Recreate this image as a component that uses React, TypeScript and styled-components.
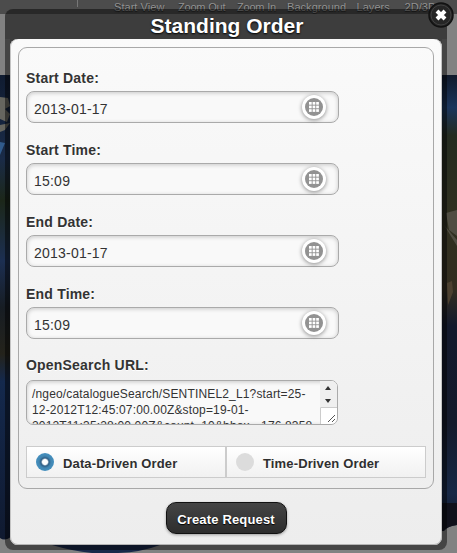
import React from "react";
import styled, { createGlobalStyle } from "styled-components";

const Global = createGlobalStyle`
  * { box-sizing: border-box; }
  html, body { margin: 0; width: 457px; height: 553px; overflow: hidden; background: #808080; }
  body { font-family: "Liberation Sans", Arial, sans-serif; color: #333; }
`;

const Page = styled.div`
  position: relative;
  width: 457px;
  height: 553px;
  overflow: hidden;
`;

const Backdrop = styled.svg`
  position: absolute;
  inset: 0;
`;

const Toolbar = styled.nav`
  position: absolute;
  inset: 0 0 auto 0;
  height: 14px;
  display: flex;
  gap: 12px;
  padding-left: 114px;
  background: #4c4c4c;
  color: #929292;
  font-size: 11px;
  line-height: 14px;
  white-space: nowrap;
  text-shadow: 0 1px 1px #222;
`;

const ToolItem = styled.span<{ $w: number; $tight?: boolean }>`
  flex: 0 0 ${(p) => p.$w}px;
  min-width: 0;
  letter-spacing: ${(p) => (p.$tight ? "-0.2px" : "0.05px")};
`;

const Separator = styled.i`
  position: absolute;
  left: 77px;
  top: 0;
  width: 1px;
  height: 7px;
  background: #777;
`;

const Frame = styled.section`
  position: absolute;
  left: 5px;
  top: 9px;
  width: 442px;
  height: 541px;
  padding: 0 5px 5px;
  border-radius: 8px;
  background: rgba(0, 0, 0, 0.47);
  display: flex;
  flex-direction: column;
`;

const TitleBar = styled.header`
  flex: 0 0 30px;
  margin: 0 -5px;
  padding-top: 5px;
  border-radius: 8px 8px 0 0;
  background: linear-gradient(transparent 5px, #3d3d3d 5px);
  color: #fff;
  font-size: 21px;
  font-weight: bold;
  line-height: 24px;
  text-align: center;
  text-shadow: 0 1px 2px #000;
`;

const TitleText = styled.span`
  padding-left: 2px;
`;

const PanelHolder = styled.div`
  flex: 1;
  background: linear-gradient(#3d3d3d 12px, transparent 12px);
`;

const Panel = styled.form`
  height: 506px;
  padding: 8px;
  border-radius: 8px;
  background: linear-gradient(#fafafa, #ededed);
  box-shadow: inset 0 -1px #b4b4b4, inset -1px 0 #c4c4c4, inset 1px 0 #c4c4c4;
  display: flex;
  flex-direction: column;
  align-items: center;
`;

const Fields = styled.div`
  width: 416px;
  height: 442px;
  padding: 20px 7px 0;
  border: 1px solid #a8a8a8;
  border-radius: 9px;
`;

const Field = styled.div`
  height: 72px;
`;

const UrlField = styled.div`
  height: 91px;
  margin-top: -1px;
  display: flex;
  flex-direction: column;
  gap: 2px;
`;

const Label = styled.label`
  display: block;
  height: 23px;
  font-size: 14px;
  font-weight: bold;
  line-height: 20px;
  letter-spacing: 0.2px;
  text-shadow: 0 1px 0 #fff;
`;

const InputBox = styled.div`
  width: 313px;
  height: 32px;
  padding: 2px 12px 0 7px;
  border: 1px solid #aaa;
  border-radius: 8px;
  background: #f9f9f9;
  box-shadow: inset 0 1px 4px rgba(0, 0, 0, 0.2);
  display: flex;
  justify-content: space-between;
  font-size: 14px;
  letter-spacing: 0.22px;
  line-height: 31px;
`;

const GridButton = styled.span`
  width: 24px;
  height: 24px;
  margin-top: 1px;
  border-radius: 50%;
  background: #fff;
  box-shadow: 0 1px 4px rgba(0, 0, 0, 0.45);
  display: grid;
  place-items: center;
`;

const UrlBox = styled.div`
  position: relative;
  width: 312px;
  height: 45px;
  padding: 5px 17px 0 5px;
  border: 1px solid #aaa;
  border-radius: 7px;
  background: #f9f9f9;
  box-shadow: inset 0 1px 4px rgba(0, 0, 0, 0.2);
  overflow: hidden;
  font-size: 12px;
  letter-spacing: 0.16px;
  line-height: 16px;
  white-space: pre;
`;

const Scroll = styled.svg`
  position: absolute;
  right: 0;
  top: 0;
`;

const Choices = styled.div`
  display: grid;
  grid-template-columns: 200px 200px;
  height: 32px;
`;

const Choice = styled.div`
  display: flex;
  align-items: center;
  gap: 9px;
  padding: 2px 0 0 9px;
  border: 1px solid #ccc;
  background: linear-gradient(#fff, #f1f1f1);
  color: #2f2f2f;
  font-size: 13px;
  font-weight: bold;
  letter-spacing: 0.14px;
  text-shadow: 0 1px 0 #fff;
`;

const Radio = styled.span<{ $on?: boolean }>`
  width: 18px;
  height: 18px;
  margin-top: -3px;
  border-radius: 50%;
  background: ${(p) =>
    p.$on ? "radial-gradient(circle, #fff 0 2.5px, #315f86 4px, #4186b2 6px, #4590bf 9px)" : "#dcdcdc"};
`;

const Submit = styled.button`
  width: 121px;
  height: 32px;
  margin-top: 13px;
  padding: 2px 0 0;
  border: 1px solid #111;
  border-radius: 10px;
  background: linear-gradient(#444, #2d2d2d);
  box-shadow: 0 1px 3px rgba(0, 0, 0, 0.35);
  color: #fff;
  font: bold 13px "Liberation Sans", Arial, sans-serif;
  letter-spacing: 0.16px;
  text-shadow: 0 1px 1px #000;
  white-space: nowrap;
`;

const Close = styled.svg`
  position: absolute;
  left: 428px;
  top: 1px;
`;

const GridIcon = () => (
  <GridButton>
    <svg width="18" height="18">
      <circle cx="9" cy="9" r="9" fill="#929292" />
      {[4, 7.6, 11.2].map((y) =>
        [4, 7.6, 11.2].map((x) => <rect key={`${x}-${y}`} x={x} y={y} width="2.7" height="2.7" fill="#fff" />)
      )}
    </svg>
  </GridButton>
);

const fields = [
  ["Start Date:", "2013-01-17"],
  ["Start Time:", "15:09"],
  ["End Date:", "2013-01-17"],
  ["End Time:", "15:09"],
];

const tools: { name: string; w: number; tight?: boolean }[] = [
  { name: "Start View", w: 52 },
  { name: "Zoom Out", w: 47, tight: true },
  { name: "Zoom In", w: 38, tight: true },
  { name: "Background", w: 57.5 },
  { name: "Layers", w: 36 },
  { name: "2D/3D", w: 40 },
];

const MapScene = () => (
  <Backdrop width="457" height="553">
    <defs>
      <linearGradient id="west" x2="0" y2="1">
        <stop offset="0" stopColor="#101c31" />
        <stop offset=".18" stopColor="#1a2b48" />
        <stop offset=".27" stopColor="#1c2719" />
        <stop offset=".4" stopColor="#1c2f52" />
        <stop offset=".5" stopColor="#171d24" />
        <stop offset=".6" stopColor="#24231b" />
        <stop offset=".66" stopColor="#14294d" />
        <stop offset="1" stopColor="#101a30" />
      </linearGradient>
      <linearGradient id="east" x2="0" y2="1">
        <stop offset="0" stopColor="#111a2b" />
        <stop offset=".07" stopColor="#1b355c" />
        <stop offset=".13" stopColor="#242b20" />
        <stop offset=".3" stopColor="#303020" />
        <stop offset=".46" stopColor="#332d20" />
        <stop offset=".54" stopColor="#13192c" />
        <stop offset=".75" stopColor="#141a2b" />
        <stop offset=".9" stopColor="#172846" />
        <stop offset="1" stopColor="#10131f" />
      </linearGradient>
    </defs>
    <rect width="457" height="553" fill="#828282" />
    <path d="M0 75H228V536H12Q5 542 0 538Z" fill="url(#west)" />
    <path d="M228 75H457V525Q448 526 444 531L228 540Z" fill="url(#east)" />
    <path d="M0 97L8 98 10 106 5 109 10 114 7 122 0 119Z M0 125L10 123 5 130 0 132Z" fill="#66665f" />
    <path d="M0 142L5 143 0 155Z" fill="#315b8c" />
    <path d="M446 213L457 210V236L449 230Z M444 225L457 240V246Z" fill="#504d42" />
    <path d="M447 283L452 281 453 292 448 305Z" fill="#4c4030" />
    <path d="M442 503H457V525Q448 526 442 531Z" fill="#10111b" />
    <path d="M52 545H160Q142 552 118 553H92Q72 551 52 545Z" fill="#19294a" />
  </Backdrop>
);

export default function App() {
  return (
    <Page>
      <Global />
      <MapScene />
      <Toolbar>
        <Separator />
        {tools.map((t) => (
          <ToolItem key={t.name} $w={t.w} $tight={t.tight}>{t.name}</ToolItem>
        ))}
      </Toolbar>
      <Frame>
        <TitleBar><TitleText>Standing Order</TitleText></TitleBar>
        <PanelHolder>
          <Panel>
            <Fields>
              {fields.map(([label, value]) => (
                <Field key={label}>
                  <Label>{label}</Label>
                  <InputBox>{value}<GridIcon /></InputBox>
                </Field>
              ))}
              <UrlField>
                <Label>OpenSearch URL:</Label>
                <UrlBox>
                  {"/ngeo/catalogueSearch/SENTINEL2_L1?start=25-\n12-2012T12:45:07:00.00Z&stop=19-01-\n2012T11:35:28:00.00Z&count=10&bbox=-176.8358"}
                  <Scroll width="17" height="43">
                    <rect width="17" height="43" fill="#fff" />
                    <rect width="17" height="26" fill="#efefef" />
                    <path d="M.5 43V26.5H17" fill="none" stroke="#ccc" />
                    <path d="M5 9L8 5L11 9Z M5 18H11L8 22Z" fill="#333" />
                    <path d="M8 41L15 34M12 41L15 38" stroke="#555" />
                  </Scroll>
                </UrlBox>
              </UrlField>
              <Choices>
                <Choice><Radio $on />Data-Driven Order</Choice>
                <Choice><Radio />Time-Driven Order</Choice>
              </Choices>
            </Fields>
            <Submit type="button">Create Request</Submit>
          </Panel>
        </PanelHolder>
      </Frame>
      <Close width="28" height="28">
        <circle cx="13" cy="14" r="12" fill="#222" stroke="#111" strokeWidth="1.5" />
        <circle cx="13" cy="14" r="10" fill="#262626" stroke="#424242" />
        <path d="M9 10L17 18M17 10L9 18" stroke="#fff" strokeWidth="4" />
      </Close>
    </Page>
  );
}
